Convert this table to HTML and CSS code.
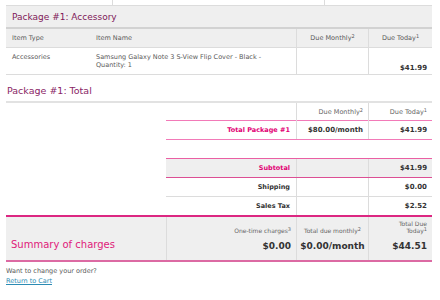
FILE: index.html
```html
<!DOCTYPE html>
<html lang="en">
<head>
  <meta charset="UTF-8">
  <title>Review Order</title>
  <link rel="stylesheet" href="styles.css">
</head>
<body>
  <div class="page">
    <!-- end of the previous package table -->
    <div class="tail">
      <div class="cell"></div>
      <div class="cell"></div>
      <div class="cell"></div>
    </div>

    <!-- Package 1 items -->
    <h2 class="pkg-head">Package #1: Accessory</h2>
    <div class="items">
      <div class="row head">
        <div class="cell">Item Type</div>
        <div class="cell">Item Name</div>
        <div class="cell center line">Due Monthly<sup>2</sup></div>
        <div class="cell center line">Due Today<sup>1</sup></div>
      </div>
      <div class="row item">
        <div class="cell">Accessories</div>
        <div class="cell">Samsung Galaxy Note 3 S-View Flip Cover - Black -<br>Quantity: 1</div>
        <div class="cell line"></div>
        <div class="cell line amount">$41.99</div>
      </div>
    </div>

    <!-- Package 1 totals -->
    <h3 class="total-title">Package #1: Total</h3>
    <div class="totals">
      <div class="row head">
        <div class="cell"></div>
        <div class="cell line">Due Monthly<sup>2</sup></div>
        <div class="cell line">Due Today<sup>1</sup></div>
      </div>
      <div class="row pkg">
        <div class="cell label pink">Total Package #1</div>
        <div class="cell line amount">$80.00/month</div>
        <div class="cell line amount">$41.99</div>
      </div>
      <div class="row spacer"></div>
      <div class="row subtotal">
        <div class="cell label pink">Subtotal</div>
        <div class="cell line"></div>
        <div class="cell line amount pink">$41.99</div>
      </div>
      <div class="row shipping">
        <div class="cell label">Shipping</div>
        <div class="cell line"></div>
        <div class="cell line amount">$0.00</div>
      </div>
      <div class="row tax">
        <div class="cell label">Sales Tax</div>
        <div class="cell line"></div>
        <div class="cell line amount">$2.52</div>
      </div>
    </div>

    <!-- Summary -->
    <div class="summary">
      <div class="cell title">Summary of charges</div>
      <div class="cell line">
        <span class="sum-label">One-time charges<sup>3</sup></span>
        <span class="sum-value">$0.00</span>
      </div>
      <div class="cell line center">
        <span class="sum-label">Total due monthly<sup>2</sup></span>
        <span class="sum-value">$0.00/month</span>
      </div>
      <div class="cell line">
        <span class="sum-label">Total Due<br>Today<sup>1</sup></span>
        <span class="sum-value">$44.51</span>
      </div>
    </div>

    <div class="change">
      Want to change your order?<br>
      <a href="#">Return to Cart</a>
    </div>
  </div>
</body>
</html>
```

FILE: styles.css
```css
* {
  box-sizing: border-box;
}

body {
  margin: 0;
  font-family: "DejaVu Sans", Verdana, sans-serif;
  font-size: 6.5px;
  color: #5a5a5a;
}

.page {
  width: 426px;
  margin-left: 6px;
}

sup {
  font-size: 5px;
  line-height: 0;
  vertical-align: 2px;
}

.line {
  border-left: 1px solid #dcdcdc;
}

.center {
  text-align: center;
}

.pink {
  color: #e20074;
}

/* previous table bottom */
.tail {
  display: grid;
  grid-template-columns: 107px 212px 107px;
  height: 6px;
  border-bottom: 1px solid #dcdcdc;
}

.tail .cell:not(:last-child) {
  border-right: 1px solid #dcdcdc;
}

/* Item table */
.pkg-head {
  margin: 0;
  height: 23px;
  padding: 1px 6px 0;
  background: #efefef;
  border-bottom: 2px solid #d2d2d2;
  font-size: 9px;
  font-weight: normal;
  line-height: 20px;
  color: #7f1858;
}

.items .row {
  display: grid;
  grid-template-columns: 84px 206px 72px 64px;
  border-bottom: 1px solid #dcdcdc;
}

.items .head {
  height: 19px;
  background: #efefef;
  line-height: 18px;
}

.items .head .cell {
  padding: 0 6px;
}

.items .item {
  height: 27px;
  line-height: 8px;
}

.items .item .cell {
  padding: 5px 6px 0;
}

.items .item .amount {
  display: flex;
  align-items: flex-end;
  justify-content: flex-end;
  padding: 0 5px 2px;
}

.amount {
  font-size: 7px;
  font-weight: bold;
  color: #333;
  text-align: right;
}

/* Package totals */
.total-title {
  margin: 0;
  height: 28px;
  padding: 8px 1px 0;
  border-bottom: 2px solid #e2e2e2;
  font-size: 9.5px;
  font-weight: normal;
  line-height: 15px;
  color: #8a2566;
}

.totals {
  margin-left: 160px;
}

.totals .row {
  display: grid;
  grid-template-columns: 130px 72px 64px;
}

.totals .cell {
  padding: 0 5px;
  text-align: right;
}

.totals .label {
  padding-right: 6px;
  font-weight: bold;
  color: #333;
}

.totals .head {
  height: 18px;
  line-height: 18px;
  border-bottom: 1px solid #f27ab8;
  color: #666;
}

.totals .pkg {
  height: 19px;
  line-height: 18px;
  border-bottom: 1px solid #f27ab8;
}

.totals .label.pink {
  color: #e20074;
}

.totals .spacer {
  height: 18px;
}

.totals .subtotal {
  height: 20px;
  line-height: 18px;
  background: #efefef;
  border-top: 1px solid #ea5fa3;
  border-bottom: 1px solid #dc4f94;
}

.totals .shipping {
  height: 19px;
  line-height: 18px;
  border-bottom: 1px solid #dcdcdc;
}

.totals .tax {
  height: 18px;
  line-height: 18px;
}

/* Summary of charges */
.summary {
  display: grid;
  grid-template-columns: 160px 130px 72px 64px;
  height: 47px;
  background: #efefef;
  border-top: 2px solid #dc2782;
  border-bottom: 2px solid #dc6aa3;
}

.summary .cell {
  display: flex;
  flex-direction: column;
  justify-content: flex-end;
  align-items: flex-end;
  padding: 0 5px 8px;
  text-align: right;
}

.summary .center {
  align-items: center;
  padding: 0 2px 8px;
  text-align: center;
}

.summary .title {
  align-items: flex-start;
  font-size: 10px;
  line-height: 14px;
  color: #e0197a;
}

.sum-label {
  margin-bottom: 6px;
  font-size: 6px;
  line-height: 7px;
  white-space: nowrap;
  color: #666;
}

.sum-value {
  font-size: 9px;
  font-weight: bold;
  line-height: 12px;
  white-space: nowrap;
  color: #333;
}

/* Back link */
.change {
  padding-top: 5px;
  line-height: 9.5px;
}

.change a {
  color: #2c8bb3;
}
```
